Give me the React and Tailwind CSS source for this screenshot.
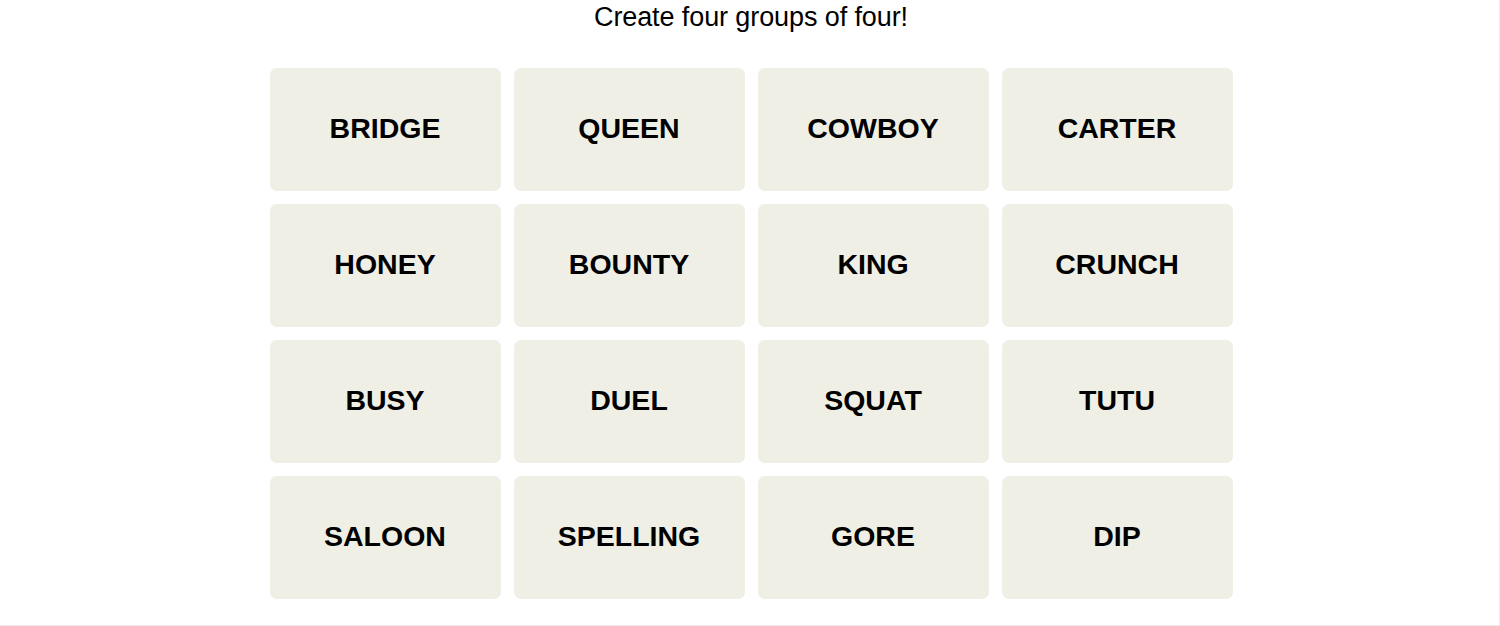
const words = [
  'BRIDGE', 'QUEEN', 'COWBOY', 'CARTER',
  'HONEY', 'BOUNTY', 'KING', 'CRUNCH',
  'BUSY', 'DUEL', 'SQUAT', 'TUTU',
  'SALOON', 'SPELLING', 'GORE', 'DIP'
]

export default function App() {
  return (
    <main
      className="flex h-[626px] w-[1500px] flex-col items-center border-r border-b border-[#ececec] bg-white text-black"
      style={{ fontFamily: '"Liberation Sans", Arial, sans-serif' }}
    >
      <p className="h-[34px] pl-[3px] text-[27px] leading-[34px] tracking-[-0.1px]">Create four groups of four!</p>
      <div className="mt-[34px] grid grid-cols-[repeat(4,231px)] grid-rows-[repeat(4,123px)] gap-[13px] pl-[3px]">
        {words.map((word) => (
          <button
            key={word}
            className="flex items-center justify-center rounded-[7px] bg-[#efefe6] pb-[2px] text-[28.5px] font-bold"
          >
            {word}
          </button>
        ))}
      </div>
    </main>
  )
}
